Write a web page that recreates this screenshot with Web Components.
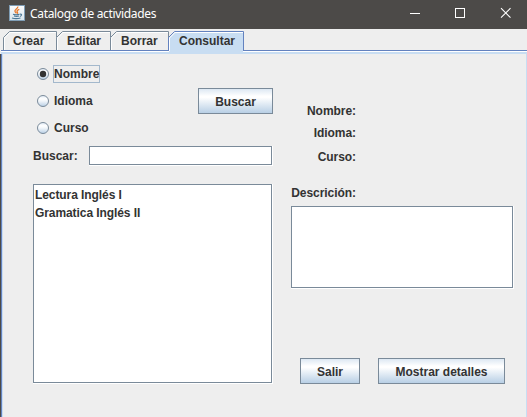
<!DOCTYPE html>
<html lang="es"><head><meta charset="utf-8"><title>Catalogo de actividades</title>
<style>
html,body{margin:0;width:527px;height:417px;overflow:hidden;background:#eee}
</style></head><body><catalog-window></catalog-window>
<script>
const define=(name,html,setup)=>customElements.define(name,class extends HTMLElement{
  constructor(){super();this.attachShadow({mode:'open'})}
  connectedCallback(){
    const t=document.createElement('template');
    t.innerHTML='<style>*{box-sizing:border-box}</style>'+html;
    this.shadowRoot.replaceChildren(t.content.cloneNode(true));
    if(setup)setup(this,this.shadowRoot);
  }
});

define('title-bar',`<style>
:host{display:flex;height:29px;background:#4c4a48;color:#fff;font:12px/27px "Noto Sans",sans-serif;box-sizing:border-box;padding-left:9px}
.logo{margin-top:5px;margin-right:5px;flex:none}
span{flex:1;white-space:nowrap;letter-spacing:-.34px}
.ctl{flex:none;width:45px;height:27px}
.ctls{display:flex}
</style>
<svg class="logo" width="16" height="16" viewBox="0 0 16 16"><defs><linearGradient id="g" x2="0" y2="1"><stop stop-color="#fbfcfd"/><stop offset="1" stop-color="#d5e3ec"/></linearGradient></defs>
<rect x=".5" y=".5" width="15" height="15" fill="url(#g)" stroke="#7f9db5"/>
<path d="M8.8 1.500C9.500 3.600 5 4.400 6 6.400q.4.900 1.500 1.900M10.300 4.300Q7 5.600 8.400 7.100q.5.800-.2 1.600" fill="none" stroke="#e8792b" stroke-width="1.300"/>
<path d="M4 9.300q3 1 6.500 0M5 11q2.500.8 5 0M3 13q4 1.300 8.500 0M10.900 9.200c2.300-.6 2.200 1.600 0 2.300" fill="none" stroke="#4d7896" stroke-width="1.100"/></svg>
<span><slot></slot></span>
<div class="ctls">
<svg class="ctl" viewBox="0 0 45 27"><path d="M18 13.500h10" stroke="#fff"/></svg>
<svg class="ctl" viewBox="0 0 45 27"><rect x="18.500" y="8.500" width="9" height="9" fill="none" stroke="#fff"/></svg>
<svg class="ctl" viewBox="0 0 45 27"><path d="M19 8.200l9.500 9.500m0-9.500L19 17.700" stroke="#fff" stroke-width="1.100"/></svg></div>`);

define('tab-item',`<style>
:host{display:block;position:relative;height:21px;font-size:12px;line-height:21px}
svg{position:absolute;inset:0;overflow:visible}
span{position:relative;display:block;padding-left:10px;white-space:nowrap}
:host(:not(:first-child)) span{padding-left:11px}
</style><svg height="21"></svg><span><slot></slot></span>`,(el,r)=>{
  const w=+el.getAttribute('w'),s=el.hasAttribute('selected');
  el.style.width=w+'px';
  const svg=r.querySelector('svg');svg.setAttribute('width',w);
  const c=s?'#6382bf':'#7a8a99';
  svg.innerHTML=s
   ?`<path d="M1 23V7L7 1H${w}V23Z" fill="#c8ddf2"/><path d="M.5 20V6.500L6.500 .5H${w+.5}V20" fill="none" stroke="${c}"/><path d="M1.500 20V7L7 1.500H${w}" fill="none" stroke="#fff"/><path d="M2 19h${w-2}v4H2z" fill="#c8ddf2"/>`
   :`<path d="M.5 19V6.500L6.500 .5H${w+.5}V19" fill="#eee" stroke="${c}"/><path d="M1.500 19V7L7 1.500H${w}" fill="none" stroke="#fff"/>`;
});

define('tab-strip',`<style>
:host{display:block;height:25px;box-sizing:border-box;padding:2px 0 0 3px;background:linear-gradient(#6382bf 0 1px,#fff 1px 2px,#c8ddf2 2px 4px) 1px 21px/100% 4px no-repeat #eee}
div{display:flex}
</style><div><slot></slot></div>`);

define('radio-option',`<style>
:host{display:flex;align-items:center;height:27px;padding-left:4px;font-size:12px}
svg{flex:none;margin-right:4px;margin-bottom:1px}
span{display:block;height:18px;line-height:19px;padding:0 1px;margin-bottom:1px;white-space:nowrap}
:host([checked]) span{box-shadow:inset 0 0 0 1px #a3b8cc}
.dot{display:none}:host([checked]) .dot{display:block}
</style><svg width="12" height="12" viewBox="0 0 12 12"><defs><linearGradient id="g" x2="0" y2="1"><stop stop-color="#dde8f3"/><stop offset=".3" stop-color="#fff"/><stop offset=".5" stop-color="#f2f6fa"/><stop offset="1" stop-color="#b8cfe5"/></linearGradient></defs><circle cx="6" cy="6" r="5.500" fill="url(#g)" stroke="#7a8a99"/><circle class="dot" cx="6" cy="6" r="3.200" fill="#333"/></svg><span><slot></slot></span>`);

define('metal-button',`<style>
:host{display:block;flex:none;height:26px}
button{display:block;width:100%;height:26px;padding:1px 0 0;border:1px solid #7a8a99;border-radius:0;color:inherit;font:inherit;letter-spacing:inherit;line-height:24px;white-space:nowrap;background:linear-gradient(#dde8f3,#fff 30%,#fff 35%,#b8cfe5)}
</style><button><slot></slot></button>`);

define('metal-box',`<style>
:host{display:block;border:solid #fff;border-width:0 1px 1px 0;box-sizing:border-box}
div{height:100%;border:1px solid #7a8a99;background:#fff;padding:1px;line-height:18px}
</style><div><slot></slot></div>`);

define('detail-label',`<style>
:host{display:block;width:65px;height:14px;line-height:14px;text-align:right;white-space:nowrap;letter-spacing:-.05px}
</style><slot></slot>`);

define('query-panel',`<style>
:host{display:flex;gap:18px;height:363px;box-sizing:border-box;padding-left:30px;margin-left:3px;margin-right:1px}
.left{width:240px;padding-top:7px}
.top{display:flex;justify-content:space-between}
.top metal-button{width:75px;margin-top:27px}
.find{display:flex;justify-content:space-between;height:20px;margin:4px 0 18px}
.find span{line-height:21px}.find metal-box{width:184px;height:20px}
.list{height:200px}.item{white-space:nowrap;letter-spacing:-.08px}
.right{width:223px;padding-top:50px}
.idi{margin-top:8px}.cur{margin-top:10px}.des{margin-top:22px}
.text{height:83px;margin-top:6px}
.actions{display:flex;gap:18px;margin:69px 0 0 9px}
</style>
<div class="left"><div class="top"><div>
<radio-option checked>Nombre</radio-option><radio-option>Idioma</radio-option><radio-option>Curso</radio-option></div><metal-button>Buscar</metal-button></div>
<div class="find"><span>Buscar:</span><metal-box></metal-box></div>
<metal-box class="list"><div class="item">Lectura Inglés I</div><div class="item">Gramatica Inglés II</div></metal-box></div>
<div class="right"><detail-label>Nombre:</detail-label><detail-label class="idi">Idioma:</detail-label><detail-label class="cur">Curso:</detail-label><detail-label class="des">Descrición:</detail-label>
<metal-box class="text"></metal-box>
<div class="actions"><metal-button style="width:60px">Salir</metal-button><metal-button style="width:127px">Mostrar detalles</metal-button></div></div>`);

define('catalog-window',`<style>
:host{display:block;width:527px;height:417px;overflow:hidden;color:#333;font:bold 12px "Liberation Sans",Arial,sans-serif}
.body{background:linear-gradient(90deg,#4c4a48 0 1px,#6382bf 1px 2px,#c8ddf2 2px 3px,#eee 3px 526px,#c8ddf2 526px)}
</style><title-bar>Catalogo de actividades</title-bar>
<tab-strip><tab-item w="53">Crear</tab-item><tab-item w="54">Editar</tab-item><tab-item w="58">Borrar</tab-item><tab-item w="75" selected>Consultar</tab-item></tab-strip>
<div class="body"><query-panel></query-panel></div>`);
</script></body></html>
